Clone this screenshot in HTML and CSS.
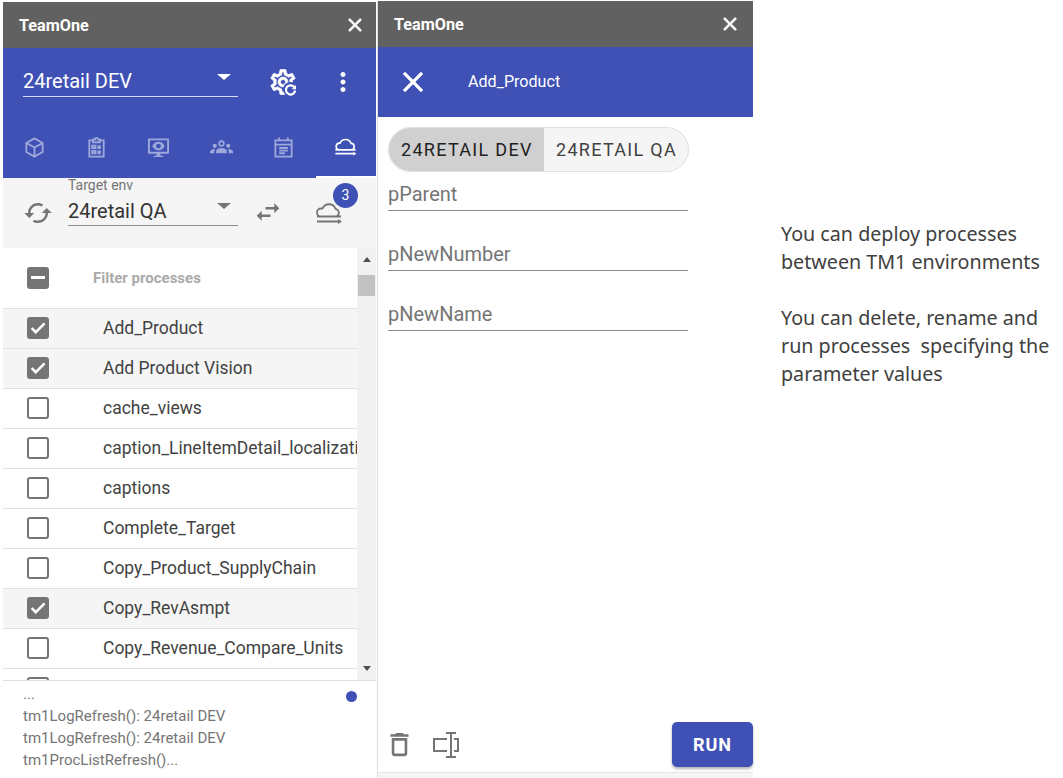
FILE: index.html
```html
<!DOCTYPE html>
<html lang="en">
<head>
    <meta charset="UTF-8" />
    <title>TeamOne</title>
    <link rel="stylesheet" href="styles.css">
</head>
<body>
    <svg class="defs" width="0" height="0">
        <symbol id="close" viewBox="0 0 24 24"><path d="M19 6.41L17.59 5 12 10.59 6.41 5 5 6.41 10.59 12 5 17.59 6.41 19 12 13.41 17.59 19 19 17.59 13.41 12z"/></symbol>
        <symbol id="check" viewBox="0 0 24 24"><path d="M9 16.17L4.83 12l-1.42 1.41L9 19 21 7l-1.41-1.41z"/></symbol>
    </svg>

    <!-- Main panel -->
    <section class="panel panel-main">
        <header class="titlebar">
            <span class="app-name">TeamOne</span>
            <svg class="titlebar-close"><use href="#close"/></svg>
        </header>

        <div class="hero">
            <div class="hero-top">
                <div class="select select-light">
                    <span>24retail DEV</span>
                    <i class="caret"></i>
                </div>
                <svg class="gear" viewBox="0 0 24 24">
                    <path class="gear-body" d="M19.43 12.98c.04-.32.07-.64.07-.98 0-.34-.03-.66-.07-.98l2.11-1.65c.19-.15.24-.42.12-.64l-2-3.46c-.09-.16-.26-.25-.44-.25-.06 0-.12.01-.17.03l-2.49 1c-.52-.4-1.08-.73-1.69-.98l-.38-2.65C14.46 2.18 14.25 2 14 2h-4c-.25 0-.46.18-.49.42l-.38 2.65c-.61.25-1.17.59-1.69.98l-2.49-1c-.06-.02-.12-.03-.18-.03-.17 0-.34.09-.43.25l-2 3.46c-.13.22-.07.49.12.64l2.11 1.65c-.04.32-.07.65-.07.98 0 .33.03.66.07.98l-2.11 1.65c-.19.15-.24.42-.12.64l2 3.46c.09.16.26.25.44.25.06 0 .12-.01.17-.03l2.49-1c.52.4 1.08.73 1.69.98l.38 2.65c.03.24.24.42.49.42h4c.25 0 .46-.18.49-.42l.38-2.65c.61-.25 1.17-.59 1.69-.98l2.49 1c.06.02.12.03.18.03.17 0 .34-.09.43-.25l2-3.46c.12-.22.07-.49-.12-.64l-2.11-1.65zm-1.98-1.71c.04.31.05.52.05.73 0 .21-.02.43-.05.73l-.14 1.13.89.7 1.08.84-.7 1.21-1.27-.51-1.04-.42-.9.68c-.43.32-.84.56-1.25.73l-1.06.43-.16 1.13-.2 1.35h-1.4l-.19-1.35-.16-1.13-1.06-.43c-.43-.18-.83-.41-1.23-.71l-.91-.7-1.06.43-1.27.51-.7-1.21 1.08-.84.89-.7-.14-1.13c-.03-.31-.05-.54-.05-.74s.02-.43.05-.73l.14-1.13-.89-.7-1.08-.84.7-1.21 1.27.51 1.04.42.9-.68c.43-.32.84-.56 1.25-.73l1.06-.43.16-1.13.2-1.35h1.39l.19 1.35.16 1.13 1.06.43c.43.18.83.41 1.23.71l.91.7 1.06-.43 1.27-.51.7 1.21-1.07.85-.89.7.14 1.13zM12 8c-2.21 0-4 1.79-4 4s1.79 4 4 4 4-1.79 4-4-1.79-4-4-4zm0 6c-1.1 0-2-.9-2-2s.9-2 2-2 2 .9 2 2-.9 2-2 2z"/>
                    <circle class="gear-hole" cx="18" cy="18" r="6"/>
                    <path class="gear-refresh" d="M21.2 16.4a3.7 3.7 0 1 0 .5 2.4"/>
                    <path d="M22.4 14.3v3.4h-3.4z"/>
                </svg>
                <svg class="more" viewBox="0 0 24 24"><path d="M12 8c1.1 0 2-.9 2-2s-.9-2-2-2-2 .9-2 2 .9 2 2 2zm0 2c-1.1 0-2 .9-2 2s.9 2 2 2 2-.9 2-2-.9-2-2-2zm0 6c-1.1 0-2 .9-2 2s.9 2 2 2 2-.9 2-2-.9-2-2-2z"/></svg>
            </div>

            <nav class="tabs">
                <div class="tab">
                    <svg class="tab-icon" viewBox="0 0 24 24"><path d="M12 2.500l8.500 4.800v9.400L12 21.500l-8.500-4.800V7.300zM3.500 7.300L12 12l8.500-4.700M12 12v9.500"/></svg>
                </div>
                <div class="tab">
                    <svg class="tab-icon" viewBox="0 0 24 24"><path d="M8.500 4.500H4.500v17h15v-17h-4M8.500 3.500h2a1.500 1.500 0 0 1 3 0h2v3h-7zM7.500 10H11v2.500H7.500zM7.500 15.500H11V18H7.500zM13 10.500h3.500M13 12.500h3.500M13 16h3.500M13 18h3.500"/></svg>
                </div>
                <div class="tab">
                    <svg class="tab-icon tab-icon-solid" viewBox="0 0 24 24"><path fill-rule="evenodd" d="M2 2.500h20a1 1 0 0 1 1 1v14a1 1 0 0 1-1 1h-8v2h3V22H7v-1.500h3v-2H2a1 1 0 0 1-1-1v-14a1 1 0 0 1 1-1zm1 2v12h18v-12zM12 6c3.200 0 5.500 2.200 6.500 4.500-1 2.300-3.300 4.500-6.500 4.500s-5.500-2.200-6.500-4.500C6.500 8.200 8.800 6 12 6zm0 2a2.500 2.500 0 1 0 0 5 2.500 2.500 0 0 0 0-5z"/></svg>
                </div>
                <div class="tab">
                    <svg class="tab-icon tab-icon-solid" viewBox="0 0 24 24"><path fill-rule="evenodd" d="M12 4.500a3.300 3.300 0 1 1 0 6.600 3.300 3.300 0 0 1 0-6.600zm0 1.700a1.600 1.600 0 1 0 0 3.200 1.600 1.600 0 0 0 0-3.200zM5 8a2.200 2.200 0 1 1 0 4.400A2.200 2.200 0 0 1 5 8zM19 8a2.200 2.200 0 1 1 0 4.400A2.200 2.200 0 0 1 19 8zM12 12.500c3 0 5.500 1.200 5.500 3.200V18h-11v-2.300c0-2 2.500-3.200 5.500-3.200zM5.200 13.500l.3.100c-.6.600-1 1.300-1 2.200V18H0v-1.500c0-1.800 2.500-3 5.200-3zM18.800 13.500c2.700 0 5.200 1.200 5.200 3V18h-4.500v-2.200c0-.9-.4-1.600-1-2.200z"/></svg>
                </div>
                <div class="tab">
                    <svg class="tab-icon" viewBox="0 0 24 24"><path d="M3.500 4.500h17v17h-17zM3.500 9h17M7.500 1.500v3M16.500 1.500v3M7.500 12.500h9M7.500 15.300h9M7.500 18h6"/></svg>
                </div>
                <div class="tab tab-active">
                    <svg class="tab-icon" viewBox="0 0 24 24"><path d="M1.500 15.500h21M5 15.500a3.600 3.600 0 0 1 0-7h1.300a6.200 6.200 0 0 1 11.600.300 3.400 3.400 0 0 1 .6 6.700M1.500 19.500h20"/><path class="arrowhead" d="M20 17.500l3.500 2-3.500 2z"/></svg>
                </div>
            </nav>
        </div>

        <div class="target">
            <svg class="tool-icon cached" viewBox="0 0 24 24"><path d="M19 8l-4 4h3c0 3.310-2.690 6-6 6-1.010 0-1.970-.25-2.800-.7l-1.460 1.460C8.970 19.540 10.430 20 12 20c4.420 0 8-3.580 8-8h3l-4-4zM6 12c0-3.310 2.690-6 6-6 1.010 0 1.970.25 2.800.7l1.460-1.460C15.030 4.460 13.570 4 12 4c-4.420 0-8 3.580-8 8H1l4 4 4-4H6z"/></svg>
            <div class="target-env">
                <label class="target-label">Target env</label>
                <div class="select select-dark">
                    <span>24retail QA</span>
                    <i class="caret"></i>
                </div>
            </div>
            <svg class="tool-icon swap" viewBox="0 0 24 24"><path d="M6.990 11L3 15l3.990 4v-3H14v-2H6.990v-3zM21 9l-3.990-4v3H10v2h7.010v3L21 9z"/></svg>
            <div class="deploy">
                <svg class="deploy-icon" viewBox="0 0 26 24"><path d="M1 16.500h24M5 16.500a4 4 0 0 1 0-8h1.500a7 7 0 0 1 13 .3 4 4 0 0 1 .7 7.700M1 21.500h22"/><path class="arrowhead" d="M22 19l4 2.500-4 2.500z"/></svg>
                <span class="badge">3</span>
            </div>
        </div>

        <div class="list-wrap">
            <div class="list">
                <div class="filter-row">
                    <span class="box box-on"><i class="dash"></i></span>
                    <span class="filter-text">Filter processes</span>
                </div>
                <div class="row row-on"><span class="box box-on"><svg><use href="#check"/></svg></span><span class="row-name">Add_Product</span></div>
                <div class="row row-on"><span class="box box-on"><svg><use href="#check"/></svg></span><span class="row-name">Add Product Vision</span></div>
                <div class="row"><span class="box"></span><span class="row-name">cache_views</span></div>
                <div class="row"><span class="box"></span><span class="row-name">caption_LineItemDetail_localization</span></div>
                <div class="row"><span class="box"></span><span class="row-name">captions</span></div>
                <div class="row"><span class="box"></span><span class="row-name">Complete_Target</span></div>
                <div class="row"><span class="box"></span><span class="row-name">Copy_Product_SupplyChain</span></div>
                <div class="row row-on"><span class="box box-on"><svg><use href="#check"/></svg></span><span class="row-name">Copy_RevAsmpt</span></div>
                <div class="row"><span class="box"></span><span class="row-name">Copy_Revenue_Compare_Units</span></div>
                <div class="row"><span class="box"></span></div>
            </div>
            <div class="scrollbar">
                <i class="sb-up"></i>
                <i class="sb-thumb"></i>
                <i class="sb-down"></i>
            </div>
        </div>

        <footer class="log">
            <i class="log-dot"></i>
            <p>...</p>
            <p>tm1LogRefresh(): 24retail DEV</p>
            <p>tm1LogRefresh(): 24retail DEV</p>
            <p>tm1ProcListRefresh()...</p>
        </footer>
    </section>

    <!-- Process detail panel -->
    <section class="panel panel-detail">
        <header class="titlebar">
            <span class="app-name">TeamOne</span>
            <svg class="titlebar-close"><use href="#close"/></svg>
        </header>

        <div class="detail-head">
            <svg class="detail-close"><use href="#close"/></svg>
            <span class="detail-title">Add_Product</span>
        </div>

        <div class="detail-body">
            <div class="toggle">
                <span class="toggle-item toggle-on">24retail dev</span>
                <span class="toggle-item">24retail qa</span>
            </div>
            <div class="field">pParent</div>
            <div class="field">pNewNumber</div>
            <div class="field">pNewName</div>
        </div>

        <div class="detail-foot">
            <svg class="trash" viewBox="0 0 24 24"><path d="M6 19c0 1.100.9 2 2 2h8c1.100 0 2-.9 2-2V7H6v12zM8 9h8v10H8V9zm7.500-5l-1-1h-5l-1 1H5v2h14V4z"/></svg>
            <svg class="rename" viewBox="0 0 26 26"><path d="M14 7H1v12h13M21 7h4v12h-4M18 1v24M13 1h10M13 25h10"/></svg>
            <button class="run" type="button">RUN</button>
        </div>
        <div class="detail-strip"></div>
    </section>

    <!-- Notes beside the panels -->
    <aside class="notes">
        <p>You can deploy processes<br>between TM1 environments</p>
        <p>You can delete, rename and<br>run processes&nbsp; specifying the<br>parameter values</p>
    </aside>
</body>
</html>
```

FILE: styles.css
```css
/* Page */
html, body {
    margin: 0;
    height: 778px;
    overflow: hidden;
    background: #fff;
}

body {
    display: flex;
    align-items: flex-start;
    font-family: Roboto, sans-serif;
}

.defs {
    position: absolute;
}

p {
    margin: 0;
}

/* Panels */
.panel {
    display: flex;
    flex-direction: column;
    height: 776px;
}

.panel-main {
    box-sizing: border-box;
    width: 375px;
    margin: 2px 0 0 3px;
    padding-right: 1px;
    border-right: 1px solid #ddd;
}

.panel-detail {
    width: 375px;
    height: 777px;
    margin-top: 1px;
}

.titlebar {
    display: flex;
    align-items: center;
    justify-content: space-between;
    flex: none;
    height: 46px;
    padding: 0 10px 0 16px;
    background: #616161;
    color: #fff;
}

.panel-detail .titlebar {
    padding-right: 12px;
}

.app-name {
    font-size: 16.200px;
    font-weight: 700;
}

.titlebar-close {
    width: 22px;
    height: 22px;
    fill: #fff;
    stroke: #fff;
    stroke-width: 1;
}

/* Blue header */
.hero {
    flex: none;
    height: 130px;
    background: #3f51b5;
}

.hero-top {
    display: flex;
    align-items: center;
    height: 68px;
    padding-left: 20px;
}

.select {
    position: relative;
    box-sizing: border-box;
    height: 29px;
    font-size: 20px;
}

.select-light {
    width: 215px;
    margin-top: 1px;
    border-bottom: 1px solid #d9dcf0;
    color: #fff;
    line-height: 27px;
}

.select-dark {
    width: 170px;
    border-bottom: 1px solid #8a8a8a;
    color: #333;
    line-height: 29px;
}

.caret {
    position: absolute;
    top: 6px;
    right: 7px;
    border-style: solid;
    border-width: 6px 7px 0;
    border-color: #fff transparent transparent;
}

.select-dark .caret {
    border-top-color: #757575;
}

.gear {
    width: 30px;
    height: 30px;
    margin-left: 30px;
    fill: #fff;
}

.gear-body {
    stroke: #fff;
    stroke-width: 0.500;
}

.gear-hole {
    fill: #3f51b5;
}

.gear .gear-refresh {
    fill: none;
    stroke: #fff;
    stroke-width: 1.800;
}

.more {
    width: 30px;
    height: 30px;
    margin-left: 30px;
    fill: #fff;
}

.tabs {
    display: flex;
    justify-content: space-between;
    height: 62px;
    padding-left: 1px;
}

.tab {
    display: flex;
    align-items: center;
    justify-content: center;
    box-sizing: border-box;
    width: 60px;
}

.tab-icon {
    width: 23px;
    height: 23px;
    fill: none;
    stroke: #9fa8da;
    stroke-width: 1.900;
}

.tab-icon-solid {
    fill: #9fa8da;
    stroke: none;
}

.tab-active {
    border-bottom: 2px solid #fff;
}

.tab-active .tab-icon {
    stroke: #fff;
    stroke-width: 1.700;
}

.arrowhead {
    fill: #fff;
    stroke: none;
}

/* Target environment */
.target {
    display: flex;
    align-items: flex-start;
    flex: none;
    height: 70px;
    background: #f5f5f5;
}

.tool-icon {
    width: 30px;
    height: 30px;
    fill: #757575;
}

.cached {
    margin: 20px 0 0 20px;
}

.target-env {
    margin-left: 15px;
}

.target-label {
    display: block;
    height: 19px;
    font-size: 14px;
    line-height: 14px;
    color: #757575;
}

.swap {
    margin: 19px 0 0 15px;
}

.deploy {
    position: relative;
    margin: 22px 0 0 33px;
}

.deploy-icon {
    display: block;
    width: 26px;
    height: 24px;
    fill: none;
    stroke: #757575;
    stroke-width: 1.800;
}

.deploy-icon .arrowhead {
    fill: #757575;
}

.badge {
    position: absolute;
    top: -17px;
    left: 17px;
    width: 25px;
    height: 25px;
    border-radius: 50%;
    background: #3f51b5;
    color: #fff;
    font-size: 14px;
    line-height: 25px;
    text-align: center;
}

/* Process list */
.list-wrap {
    display: flex;
    flex: none;
    height: 432px;
}

.list {
    flex: 1;
    min-width: 0;
    overflow: hidden;
}

.filter-row {
    display: flex;
    align-items: center;
    box-sizing: border-box;
    height: 61px;
    padding: 0 0 1px 24px;
    border-bottom: 1px solid #e0e0e0;
}

.filter-text {
    margin-left: 44px;
    font-size: 15px;
    font-weight: 700;
    color: #aaa;
}

.row {
    display: flex;
    align-items: center;
    box-sizing: border-box;
    height: 40px;
    padding: 0 0 1px 24px;
    border-bottom: 1px solid #e0e0e0;
    white-space: nowrap;
}

.row-on {
    background: #f5f5f5;
}

.row-name {
    margin-left: 54px;
    font-size: 17.500px;
    color: #424242;
}

.box {
    display: flex;
    align-items: center;
    justify-content: center;
    flex: none;
    box-sizing: border-box;
    width: 22px;
    height: 22px;
    border: 2px solid #757575;
    border-radius: 3px;
    background: #fff;
}

.box-on {
    background: #757575;
}

.box svg {
    width: 18px;
    height: 18px;
    fill: #fff;
    stroke: #fff;
    stroke-width: 1.500;
}

.dash {
    width: 14px;
    height: 3px;
    background: #fff;
}

.scrollbar {
    display: flex;
    flex-direction: column;
    align-items: center;
    flex: none;
    width: 19px;
    background: #f1f1f1;
}

.sb-up {
    margin-top: 9px;
    border-style: solid;
    border-width: 0 4px 5px;
    border-color: transparent transparent #505050;
}

.sb-thumb {
    width: 17px;
    height: 21px;
    margin-top: 13px;
    background: #c1c1c1;
}

.sb-down {
    margin-top: auto;
    margin-bottom: 9px;
    border-style: solid;
    border-width: 5px 4px 0;
    border-color: #505050 transparent transparent;
}

/* Log */
.log {
    position: relative;
    flex: 1;
    padding: 2px 0 0 20px;
    border-top: 1px solid #e0e0e0;
    background: #fff;
    font-size: 15px;
    line-height: 22px;
    color: #757575;
}

.log-dot {
    position: absolute;
    top: 10px;
    left: 343px;
    width: 11px;
    height: 11px;
    border-radius: 50%;
    background: #3f51b5;
}

/* Detail panel */
.detail-head {
    display: flex;
    align-items: center;
    flex: none;
    height: 70px;
    background: #3f51b5;
    color: #fff;
}

.detail-close {
    width: 34px;
    height: 34px;
    margin-left: 18px;
    fill: #fff;
    stroke: #fff;
    stroke-width: 0.400;
}

.detail-title {
    margin-left: 38px;
    padding-bottom: 2px;
    font-size: 16.100px;
}

.detail-body {
    flex: 1;
    padding: 10px 0 0 10px;
}

.toggle {
    display: flex;
    box-sizing: border-box;
    width: 301px;
    height: 45px;
    margin-bottom: 9px;
    border: 1px solid #e0e0e0;
    border-radius: 23px;
    overflow: hidden;
    background: #f5f5f5;
}

.toggle-item {
    box-sizing: border-box;
    padding: 0 12px;
    font-size: 18px;
    line-height: 43px;
    letter-spacing: 1.300px;
    text-transform: uppercase;
    color: #424242;
    white-space: nowrap;
}

.toggle-on {
    width: 155px;
    background: #d0d0d0;
    color: #212121;
}

.field {
    box-sizing: border-box;
    width: 300px;
    height: 30px;
    margin-bottom: 30px;
    border-bottom: 1px solid #8a8a8a;
    font-size: 20px;
    line-height: 27px;
    color: #757575;
}

.detail-foot {
    display: flex;
    align-items: flex-start;
    flex: none;
    height: 50px;
    padding-left: 10px;
}

.trash {
    width: 31px;
    height: 31px;
    margin: 7px 0 0 -4px;
    fill: #757575;
}

.rename {
    width: 26px;
    height: 26px;
    margin: 10px 0 0 18px;
    fill: none;
    stroke: #757575;
    stroke-width: 2;
}

.run {
    width: 81px;
    height: 45px;
    margin-left: auto;
    border: none;
    border-radius: 5px;
    background: #3f51b5;
    box-shadow: 0 2px 3px rgba(0, 0, 0, 0.3);
    color: #fff;
    font-family: Roboto, sans-serif;
    font-size: 18px;
    font-weight: 700;
    letter-spacing: 1px;
}

.detail-strip {
    flex: none;
    height: 5px;
    border-top: 1px solid #e6e6e6;
    background: #f5f5f5;
}

/* Notes */
.notes {
    margin: 220px 0 0 28px;
    font-family: "Noto Sans", sans-serif;
    font-size: 19.700px;
    line-height: 28px;
    color: #404040;
    white-space: nowrap;
}

.notes p {
    margin-bottom: 28px;
}
```
